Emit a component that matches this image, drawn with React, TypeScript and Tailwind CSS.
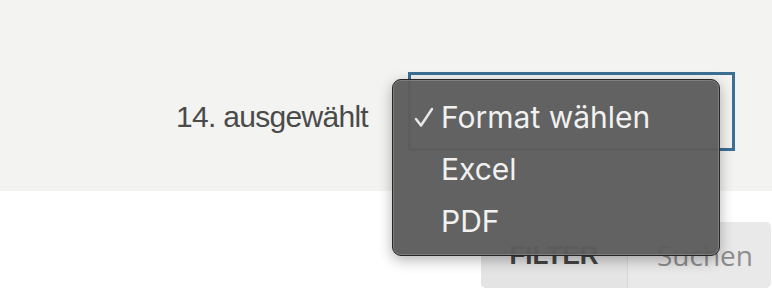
import React from "react";

export default function App() {
  return (
    <div className="relative w-[772px] h-[290px] overflow-hidden bg-white">
      {/* Export bar */}
      <div className="h-[191px] bg-[#f3f3f1] flex items-start justify-end pr-[37px] pt-[72px]">
        <span className="mt-[27px] mr-[40px] text-[30px] leading-[36px] tracking-[-0.7px] text-[#4a4a4a] font-['Liberation_Sans',Arial,sans-serif]">
          14. ausgewählt
        </span>
        <div className="w-[327px] h-[79px] border-[3px] border-[#3b6f94]" />
      </div>

      {/* Search row */}
      <div className="flex justify-end pr-[1px] pt-[31px]">
        <div className="flex h-[66px] w-[290px] rounded-[5px] bg-[#e9e9e9] overflow-hidden">
          <button className="w-[147px] bg-[#e4e4e4] border-r border-[#d6d6d6] text-[26px] font-bold text-[#444] font-['Liberation_Sans',Arial,sans-serif]">
            FILTER
          </button>
          <div className="flex-1 flex items-center pl-[29px] text-[28px] text-[#8e8e8e] font-['Open_Sans',sans-serif]">
            Suchen
          </div>
        </div>
      </div>

      {/* Native select popup */}
      <div className="absolute left-[392px] top-[79px] w-[328px] h-[177px] rounded-[9px] border border-[#262626] bg-[rgba(92,93,92,0.97)] shadow-[0_4px_14px_rgba(0,0,0,0.3),inset_0_0_0_1px_rgba(255,255,255,0.18)] pt-[11px] font-['Inter',sans-serif] text-[#f1f1f1] text-[30px]">
        <div className="relative h-[52px] flex items-center pl-[48px]">
          <svg
            className="absolute left-[21px] top-[16px]"
            width="20"
            height="21"
            viewBox="0 0 20 21"
            fill="none"
            stroke="#e8e8e8"
            strokeWidth="2.5"
            strokeLinecap="round"
            strokeLinejoin="round"
          >
            <path d="M2 12 L7 18.5 L18 2" />
          </svg>
          Format wählen
        </div>
        <div className="h-[52px] flex items-center pl-[48px]">Excel</div>
        <div className="h-[52px] flex items-center pl-[48px]">PDF</div>
      </div>
    </div>
  );
}
